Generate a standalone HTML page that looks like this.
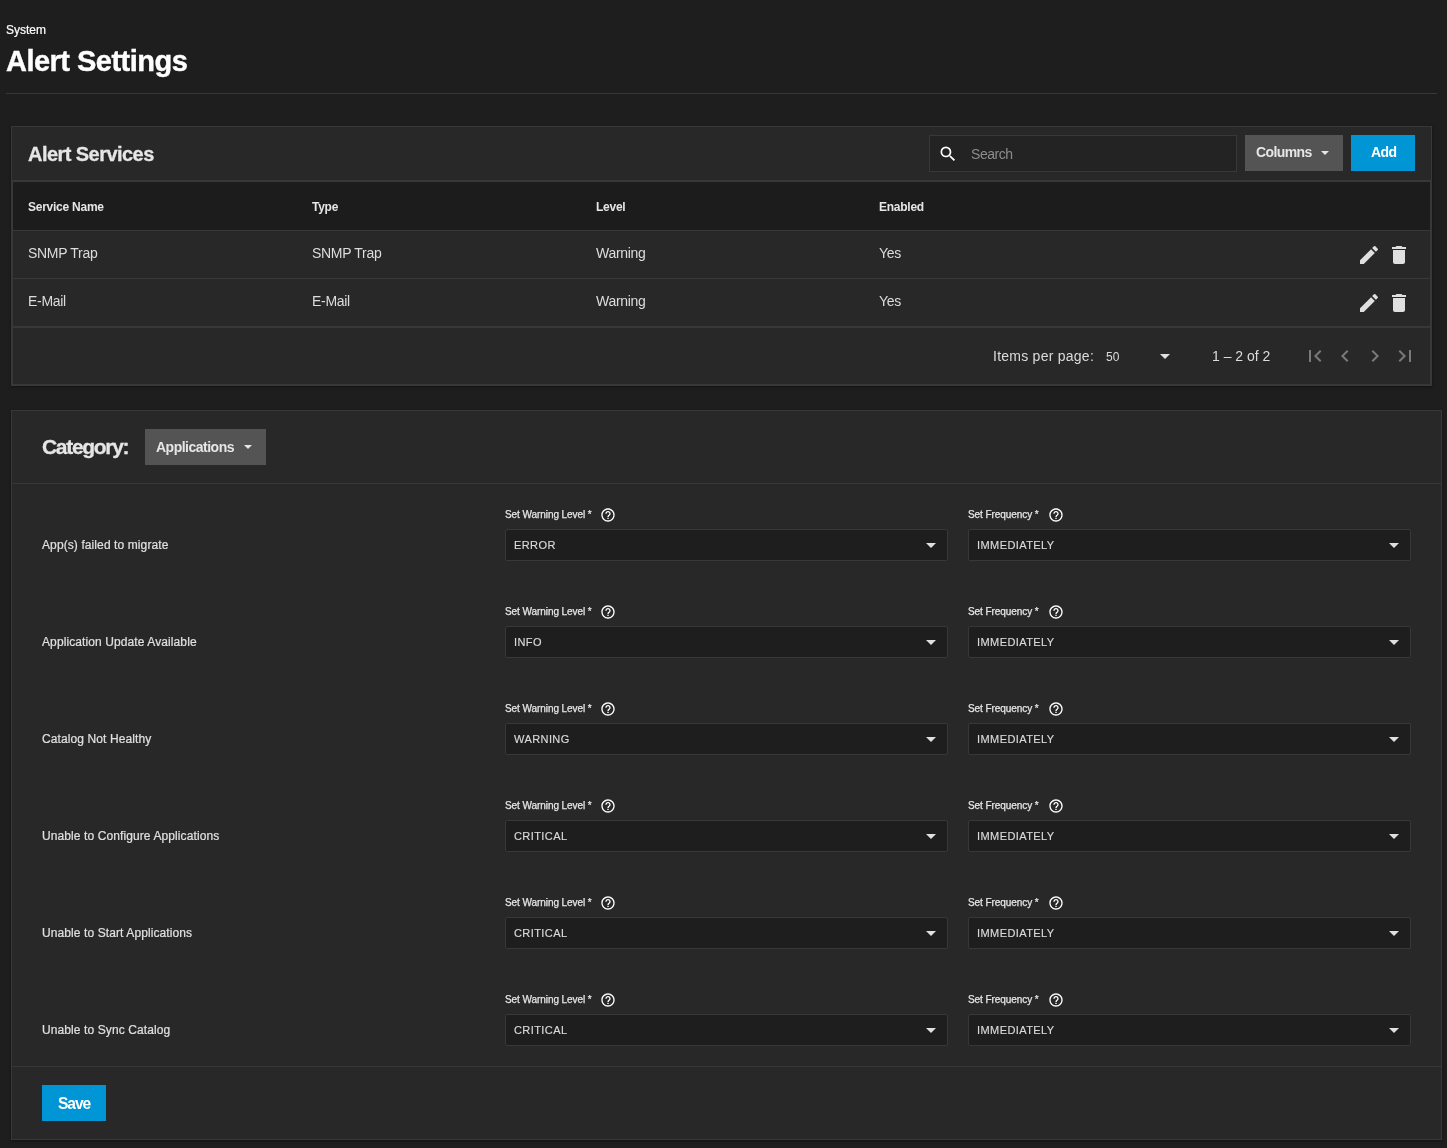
<!DOCTYPE html>
<html><head><meta charset="utf-8"><style>
html,body{margin:0;padding:0;background:#1e1e1e;width:1447px;height:1148px;overflow:hidden;position:relative;font-family:"Liberation Sans", sans-serif;}
.t{position:absolute;line-height:1;white-space:nowrap;will-change:transform;}
.b{position:absolute;box-sizing:border-box;}
svg{position:absolute;}
</style></head><body>
<div class="t" style="left:6px;top:23.94px;font-size:12px;font-weight:400;color:#ffffff;letter-spacing:0px;-webkit-text-stroke:0.2px #ffffff;">System</div>
<div class="t" style="left:6px;top:47.45px;font-size:29px;font-weight:700;color:#ffffff;letter-spacing:-0.52px;-webkit-text-stroke:0.4px #ffffff;">Alert Settings</div>
<div class="b" style="left:6px;top:93px;width:1431px;height:1px;background:#383838"></div>
<div class="b" style="left:11px;top:126px;width:1421px;height:260px;background:#282828;border:1px solid #383838;box-shadow:0 1px 3px rgba(0,0,0,.4)"></div>
<div class="t" style="left:28px;top:144.07px;font-size:20px;font-weight:700;color:#e6e6e6;letter-spacing:-0.55px;-webkit-text-stroke:0.3px #e6e6e6;">Alert Services</div>
<div class="b" style="left:929px;top:135px;width:308px;height:37px;background:#232323;border:1px solid #383838"></div>
<svg style="left:937.8px;top:143.7px" width="20" height="20" viewBox="0 0 24 24"><path fill="#ffffff" d="M15.5 14h-.79l-.28-.27A6.471 6.471 0 0 0 16 9.5 6.5 6.5 0 1 0 9.5 16c1.61 0 3.09-.59 4.23-1.57l.27.28v.79l5 4.99L20.49 19l-4.99-5zm-6 0C7.01 14 5 11.99 5 9.5S7.01 5 9.5 5 14 7.01 14 9.5 11.99 14 9.5 14z"/></svg>
<div class="t" style="left:970.5px;top:146.65px;font-size:14px;font-weight:400;color:#8c8c8c;letter-spacing:-0.45px;">Search</div>
<div class="b" style="left:1245px;top:135px;width:98px;height:36px;background:#545454"></div>
<div class="t" style="left:1255.5px;top:145.15px;font-size:14px;font-weight:700;color:#e6e6e6;letter-spacing:-0.6px;">Columns</div>
<div class="b" style="left:1321px;top:151px;width:0;height:0;border-left:4.2px solid transparent;border-right:4.2px solid transparent;border-top:4.2px solid #e6e6e6;"></div>
<div class="b" style="left:1351px;top:135px;width:64px;height:36px;background:#0095d5"></div>
<div class="t" style="left:1370.8px;top:145.45px;font-size:14px;font-weight:700;color:#ffffff;letter-spacing:-0.6px;">Add</div>
<div class="b" style="left:12px;top:180px;width:1419px;height:1px;background:#383838"></div>
<div class="b" style="left:12px;top:181px;width:1419px;height:204px;border:1px solid #383838"></div>
<div class="b" style="left:13px;top:182px;width:1417px;height:48px;background:#1c1c1c"></div>
<div class="b" style="left:13px;top:230px;width:1417px;height:1px;background:#383838"></div>
<div class="b" style="left:13px;top:278px;width:1417px;height:1px;background:#383838"></div>
<div class="b" style="left:13px;top:326px;width:1417px;height:2px;background:#383838"></div>
<div class="t" style="left:28px;top:200.84px;font-size:12px;font-weight:700;color:#e6e6e6;letter-spacing:-0.25px;">Service Name</div>
<div class="t" style="left:312px;top:200.84px;font-size:12px;font-weight:700;color:#e6e6e6;letter-spacing:-0.25px;">Type</div>
<div class="t" style="left:596px;top:200.84px;font-size:12px;font-weight:700;color:#e6e6e6;letter-spacing:-0.25px;">Level</div>
<div class="t" style="left:879px;top:200.84px;font-size:12px;font-weight:700;color:#e6e6e6;letter-spacing:-0.25px;">Enabled</div>
<div class="t" style="left:28px;top:246.25px;font-size:14px;font-weight:400;color:#dcdcdc;letter-spacing:-0.3px;">SNMP Trap</div>
<div class="t" style="left:312px;top:246.25px;font-size:14px;font-weight:400;color:#dcdcdc;letter-spacing:-0.3px;">SNMP Trap</div>
<div class="t" style="left:596px;top:246.25px;font-size:14px;font-weight:400;color:#dcdcdc;letter-spacing:-0.3px;">Warning</div>
<div class="t" style="left:879px;top:246.25px;font-size:14px;font-weight:400;color:#dcdcdc;letter-spacing:-0.3px;">Yes</div>
<svg style="left:1357px;top:243px" width="24" height="24" viewBox="0 0 24 24"><path fill="#e0e0e0" d="M3 17.25V21h3.75L17.81 9.94l-3.75-3.75L3 17.25zM20.71 7.04c.39-.39.39-1.02 0-1.41l-2.34-2.34a.996.996 0 0 0-1.41 0l-1.83 1.83 3.75 3.75 1.83-1.83z"/></svg>
<svg style="left:1387px;top:243px" width="24" height="24" viewBox="0 0 24 24"><path fill="#e0e0e0" d="M6 19c0 1.1.9 2 2 2h8c1.1 0 2-.9 2-2V7H6v12zM19 4h-3.5l-1-1h-5l-1 1H5v2h14V4z"/></svg>
<div class="t" style="left:28px;top:294.05px;font-size:14px;font-weight:400;color:#dcdcdc;letter-spacing:-0.3px;">E-Mail</div>
<div class="t" style="left:312px;top:294.05px;font-size:14px;font-weight:400;color:#dcdcdc;letter-spacing:-0.3px;">E-Mail</div>
<div class="t" style="left:596px;top:294.05px;font-size:14px;font-weight:400;color:#dcdcdc;letter-spacing:-0.3px;">Warning</div>
<div class="t" style="left:879px;top:294.05px;font-size:14px;font-weight:400;color:#dcdcdc;letter-spacing:-0.3px;">Yes</div>
<svg style="left:1357px;top:291px" width="24" height="24" viewBox="0 0 24 24"><path fill="#e0e0e0" d="M3 17.25V21h3.75L17.81 9.94l-3.75-3.75L3 17.25zM20.71 7.04c.39-.39.39-1.02 0-1.41l-2.34-2.34a.996.996 0 0 0-1.41 0l-1.83 1.83 3.75 3.75 1.83-1.83z"/></svg>
<svg style="left:1387px;top:291px" width="24" height="24" viewBox="0 0 24 24"><path fill="#e0e0e0" d="M6 19c0 1.1.9 2 2 2h8c1.1 0 2-.9 2-2V7H6v12zM19 4h-3.5l-1-1h-5l-1 1H5v2h14V4z"/></svg>
<div class="t" style="left:993px;top:349.15px;font-size:14px;font-weight:400;color:#dcdcdc;letter-spacing:0.25px;">Items per page:</div>
<div class="t" style="left:1105.5px;top:350.64px;font-size:12px;font-weight:400;color:#dcdcdc;letter-spacing:0px;">50</div>
<div class="b" style="left:1160px;top:354px;width:0;height:0;border-left:5px solid transparent;border-right:5px solid transparent;border-top:5px solid #e0e0e0;"></div>
<div class="t" style="left:1212px;top:348.95px;font-size:14px;font-weight:400;color:#dcdcdc;letter-spacing:0px;">1 – 2 of 2</div>
<svg style="left:1303px;top:344px" width="24" height="24" viewBox="0 0 24 24"><path fill="#7a7a7a" d="M18.41 16.59L13.82 12l4.59-4.59L17 6l-6 6 6 6zM6 6h2v12H6z"/></svg>
<svg style="left:1333px;top:344px" width="24" height="24" viewBox="0 0 24 24"><path fill="#7a7a7a" d="M15.41 7.41L14 6l-6 6 6 6 1.41-1.41L10.83 12z"/></svg>
<svg style="left:1363px;top:344px" width="24" height="24" viewBox="0 0 24 24"><path fill="#7a7a7a" d="M8.59 16.59L13.17 12 8.59 7.41 10 6l6 6-6 6-1.41-1.41z"/></svg>
<svg style="left:1393px;top:344px" width="24" height="24" viewBox="0 0 24 24"><path fill="#7a7a7a" d="M5.59 7.41L10.18 12l-4.59 4.59L7 18l6-6-6-6zM16 6h2v12h-2z"/></svg>
<div class="b" style="left:11px;top:410px;width:1431px;height:730px;background:#282828;border:1px solid #383838;box-shadow:0 1px 3px rgba(0,0,0,.4)"></div>
<div class="t" style="left:42px;top:436.22px;font-size:21px;font-weight:700;color:#e6e6e6;letter-spacing:-1.3px;-webkit-text-stroke:0.3px #e6e6e6;">Category:</div>
<div class="b" style="left:145px;top:429px;width:121px;height:36px;background:#545454"></div>
<div class="t" style="left:156px;top:440.45px;font-size:14px;font-weight:700;color:#e6e6e6;letter-spacing:-0.5px;">Applications</div>
<div class="b" style="left:243.5px;top:445px;width:0;height:0;border-left:4.4px solid transparent;border-right:4.4px solid transparent;border-top:4.4px solid #e6e6e6;"></div>
<div class="b" style="left:12px;top:483px;width:1429px;height:1px;background:#383838"></div>
<div class="t" style="left:41.5px;top:538.84px;font-size:12px;font-weight:400;color:#e0e0e0;letter-spacing:0.1px;-webkit-text-stroke:0.2px #e0e0e0;">App(s) failed to migrate</div>
<div class="t" style="left:505.4px;top:510.33px;font-size:10px;font-weight:400;color:#e6e6e6;letter-spacing:-0.07px;-webkit-text-stroke:0.25px #e6e6e6;">Set Warning Level *</div>
<svg style="left:600px;top:507px" width="16" height="16" viewBox="0 0 24 24"><path fill="#ffffff" d="M11 18h2v-2h-2v2zm1-16C6.48 2 2 6.48 2 12s4.48 10 10 10 10-4.48 10-10S17.52 2 12 2zm0 18c-4.41 0-8-3.59-8-8s3.59-8 8-8 8 3.59 8 8-3.59 8-8 8zm0-14c-2.21 0-4 1.79-4 4h2c0-1.1.9-2 2-2s2 .9 2 2c0 2-3 1.75-3 5h2c0-2.25 3-2.5 3-5 0-2.21-1.79-4-4-4z"/></svg>
<div class="b" style="left:505px;top:529px;width:443px;height:32px;background:#1e1e1e;border:1px solid #383838;border-radius:2px"></div>
<div class="t" style="left:513.8px;top:539.69px;font-size:11px;font-weight:400;color:#dadada;letter-spacing:0.42px;-webkit-text-stroke:0.15px #dadada;">ERROR</div>
<div class="b" style="left:926px;top:543px;width:0;height:0;border-left:5px solid transparent;border-right:5px solid transparent;border-top:5px solid #e0e0e0;"></div>
<div class="t" style="left:968.4px;top:510.33px;font-size:10px;font-weight:400;color:#e6e6e6;letter-spacing:-0.07px;-webkit-text-stroke:0.25px #e6e6e6;">Set Frequency *</div>
<svg style="left:1048px;top:507px" width="16" height="16" viewBox="0 0 24 24"><path fill="#ffffff" d="M11 18h2v-2h-2v2zm1-16C6.48 2 2 6.48 2 12s4.48 10 10 10 10-4.48 10-10S17.52 2 12 2zm0 18c-4.41 0-8-3.59-8-8s3.59-8 8-8 8 3.59 8 8-3.59 8-8 8zm0-14c-2.21 0-4 1.79-4 4h2c0-1.1.9-2 2-2s2 .9 2 2c0 2-3 1.75-3 5h2c0-2.25 3-2.5 3-5 0-2.21-1.79-4-4-4z"/></svg>
<div class="b" style="left:968px;top:529px;width:443px;height:32px;background:#1e1e1e;border:1px solid #383838;border-radius:2px"></div>
<div class="t" style="left:976.8px;top:539.69px;font-size:11px;font-weight:400;color:#dadada;letter-spacing:0.42px;-webkit-text-stroke:0.15px #dadada;">IMMEDIATELY</div>
<div class="b" style="left:1389px;top:543px;width:0;height:0;border-left:5px solid transparent;border-right:5px solid transparent;border-top:5px solid #e0e0e0;"></div>
<div class="t" style="left:41.5px;top:635.84px;font-size:12px;font-weight:400;color:#e0e0e0;letter-spacing:0.1px;-webkit-text-stroke:0.2px #e0e0e0;">Application Update Available</div>
<div class="t" style="left:505.4px;top:607.33px;font-size:10px;font-weight:400;color:#e6e6e6;letter-spacing:-0.07px;-webkit-text-stroke:0.25px #e6e6e6;">Set Warning Level *</div>
<svg style="left:600px;top:604px" width="16" height="16" viewBox="0 0 24 24"><path fill="#ffffff" d="M11 18h2v-2h-2v2zm1-16C6.48 2 2 6.48 2 12s4.48 10 10 10 10-4.48 10-10S17.52 2 12 2zm0 18c-4.41 0-8-3.59-8-8s3.59-8 8-8 8 3.59 8 8-3.59 8-8 8zm0-14c-2.21 0-4 1.79-4 4h2c0-1.1.9-2 2-2s2 .9 2 2c0 2-3 1.75-3 5h2c0-2.25 3-2.5 3-5 0-2.21-1.79-4-4-4z"/></svg>
<div class="b" style="left:505px;top:626px;width:443px;height:32px;background:#1e1e1e;border:1px solid #383838;border-radius:2px"></div>
<div class="t" style="left:513.8px;top:636.69px;font-size:11px;font-weight:400;color:#dadada;letter-spacing:0.42px;-webkit-text-stroke:0.15px #dadada;">INFO</div>
<div class="b" style="left:926px;top:640px;width:0;height:0;border-left:5px solid transparent;border-right:5px solid transparent;border-top:5px solid #e0e0e0;"></div>
<div class="t" style="left:968.4px;top:607.33px;font-size:10px;font-weight:400;color:#e6e6e6;letter-spacing:-0.07px;-webkit-text-stroke:0.25px #e6e6e6;">Set Frequency *</div>
<svg style="left:1048px;top:604px" width="16" height="16" viewBox="0 0 24 24"><path fill="#ffffff" d="M11 18h2v-2h-2v2zm1-16C6.48 2 2 6.48 2 12s4.48 10 10 10 10-4.48 10-10S17.52 2 12 2zm0 18c-4.41 0-8-3.59-8-8s3.59-8 8-8 8 3.59 8 8-3.59 8-8 8zm0-14c-2.21 0-4 1.79-4 4h2c0-1.1.9-2 2-2s2 .9 2 2c0 2-3 1.75-3 5h2c0-2.25 3-2.5 3-5 0-2.21-1.79-4-4-4z"/></svg>
<div class="b" style="left:968px;top:626px;width:443px;height:32px;background:#1e1e1e;border:1px solid #383838;border-radius:2px"></div>
<div class="t" style="left:976.8px;top:636.69px;font-size:11px;font-weight:400;color:#dadada;letter-spacing:0.42px;-webkit-text-stroke:0.15px #dadada;">IMMEDIATELY</div>
<div class="b" style="left:1389px;top:640px;width:0;height:0;border-left:5px solid transparent;border-right:5px solid transparent;border-top:5px solid #e0e0e0;"></div>
<div class="t" style="left:41.5px;top:732.84px;font-size:12px;font-weight:400;color:#e0e0e0;letter-spacing:0.1px;-webkit-text-stroke:0.2px #e0e0e0;">Catalog Not Healthy</div>
<div class="t" style="left:505.4px;top:704.33px;font-size:10px;font-weight:400;color:#e6e6e6;letter-spacing:-0.07px;-webkit-text-stroke:0.25px #e6e6e6;">Set Warning Level *</div>
<svg style="left:600px;top:701px" width="16" height="16" viewBox="0 0 24 24"><path fill="#ffffff" d="M11 18h2v-2h-2v2zm1-16C6.48 2 2 6.48 2 12s4.48 10 10 10 10-4.48 10-10S17.52 2 12 2zm0 18c-4.41 0-8-3.59-8-8s3.59-8 8-8 8 3.59 8 8-3.59 8-8 8zm0-14c-2.21 0-4 1.79-4 4h2c0-1.1.9-2 2-2s2 .9 2 2c0 2-3 1.75-3 5h2c0-2.25 3-2.5 3-5 0-2.21-1.79-4-4-4z"/></svg>
<div class="b" style="left:505px;top:723px;width:443px;height:32px;background:#1e1e1e;border:1px solid #383838;border-radius:2px"></div>
<div class="t" style="left:513.8px;top:733.69px;font-size:11px;font-weight:400;color:#dadada;letter-spacing:0.42px;-webkit-text-stroke:0.15px #dadada;">WARNING</div>
<div class="b" style="left:926px;top:737px;width:0;height:0;border-left:5px solid transparent;border-right:5px solid transparent;border-top:5px solid #e0e0e0;"></div>
<div class="t" style="left:968.4px;top:704.33px;font-size:10px;font-weight:400;color:#e6e6e6;letter-spacing:-0.07px;-webkit-text-stroke:0.25px #e6e6e6;">Set Frequency *</div>
<svg style="left:1048px;top:701px" width="16" height="16" viewBox="0 0 24 24"><path fill="#ffffff" d="M11 18h2v-2h-2v2zm1-16C6.48 2 2 6.48 2 12s4.48 10 10 10 10-4.48 10-10S17.52 2 12 2zm0 18c-4.41 0-8-3.59-8-8s3.59-8 8-8 8 3.59 8 8-3.59 8-8 8zm0-14c-2.21 0-4 1.79-4 4h2c0-1.1.9-2 2-2s2 .9 2 2c0 2-3 1.75-3 5h2c0-2.25 3-2.5 3-5 0-2.21-1.79-4-4-4z"/></svg>
<div class="b" style="left:968px;top:723px;width:443px;height:32px;background:#1e1e1e;border:1px solid #383838;border-radius:2px"></div>
<div class="t" style="left:976.8px;top:733.69px;font-size:11px;font-weight:400;color:#dadada;letter-spacing:0.42px;-webkit-text-stroke:0.15px #dadada;">IMMEDIATELY</div>
<div class="b" style="left:1389px;top:737px;width:0;height:0;border-left:5px solid transparent;border-right:5px solid transparent;border-top:5px solid #e0e0e0;"></div>
<div class="t" style="left:41.5px;top:829.84px;font-size:12px;font-weight:400;color:#e0e0e0;letter-spacing:0.1px;-webkit-text-stroke:0.2px #e0e0e0;">Unable to Configure Applications</div>
<div class="t" style="left:505.4px;top:801.33px;font-size:10px;font-weight:400;color:#e6e6e6;letter-spacing:-0.07px;-webkit-text-stroke:0.25px #e6e6e6;">Set Warning Level *</div>
<svg style="left:600px;top:798px" width="16" height="16" viewBox="0 0 24 24"><path fill="#ffffff" d="M11 18h2v-2h-2v2zm1-16C6.48 2 2 6.48 2 12s4.48 10 10 10 10-4.48 10-10S17.52 2 12 2zm0 18c-4.41 0-8-3.59-8-8s3.59-8 8-8 8 3.59 8 8-3.59 8-8 8zm0-14c-2.21 0-4 1.79-4 4h2c0-1.1.9-2 2-2s2 .9 2 2c0 2-3 1.75-3 5h2c0-2.25 3-2.5 3-5 0-2.21-1.79-4-4-4z"/></svg>
<div class="b" style="left:505px;top:820px;width:443px;height:32px;background:#1e1e1e;border:1px solid #383838;border-radius:2px"></div>
<div class="t" style="left:513.8px;top:830.69px;font-size:11px;font-weight:400;color:#dadada;letter-spacing:0.42px;-webkit-text-stroke:0.15px #dadada;">CRITICAL</div>
<div class="b" style="left:926px;top:834px;width:0;height:0;border-left:5px solid transparent;border-right:5px solid transparent;border-top:5px solid #e0e0e0;"></div>
<div class="t" style="left:968.4px;top:801.33px;font-size:10px;font-weight:400;color:#e6e6e6;letter-spacing:-0.07px;-webkit-text-stroke:0.25px #e6e6e6;">Set Frequency *</div>
<svg style="left:1048px;top:798px" width="16" height="16" viewBox="0 0 24 24"><path fill="#ffffff" d="M11 18h2v-2h-2v2zm1-16C6.48 2 2 6.48 2 12s4.48 10 10 10 10-4.48 10-10S17.52 2 12 2zm0 18c-4.41 0-8-3.59-8-8s3.59-8 8-8 8 3.59 8 8-3.59 8-8 8zm0-14c-2.21 0-4 1.79-4 4h2c0-1.1.9-2 2-2s2 .9 2 2c0 2-3 1.75-3 5h2c0-2.25 3-2.5 3-5 0-2.21-1.79-4-4-4z"/></svg>
<div class="b" style="left:968px;top:820px;width:443px;height:32px;background:#1e1e1e;border:1px solid #383838;border-radius:2px"></div>
<div class="t" style="left:976.8px;top:830.69px;font-size:11px;font-weight:400;color:#dadada;letter-spacing:0.42px;-webkit-text-stroke:0.15px #dadada;">IMMEDIATELY</div>
<div class="b" style="left:1389px;top:834px;width:0;height:0;border-left:5px solid transparent;border-right:5px solid transparent;border-top:5px solid #e0e0e0;"></div>
<div class="t" style="left:41.5px;top:926.84px;font-size:12px;font-weight:400;color:#e0e0e0;letter-spacing:0.1px;-webkit-text-stroke:0.2px #e0e0e0;">Unable to Start Applications</div>
<div class="t" style="left:505.4px;top:898.33px;font-size:10px;font-weight:400;color:#e6e6e6;letter-spacing:-0.07px;-webkit-text-stroke:0.25px #e6e6e6;">Set Warning Level *</div>
<svg style="left:600px;top:895px" width="16" height="16" viewBox="0 0 24 24"><path fill="#ffffff" d="M11 18h2v-2h-2v2zm1-16C6.48 2 2 6.48 2 12s4.48 10 10 10 10-4.48 10-10S17.52 2 12 2zm0 18c-4.41 0-8-3.59-8-8s3.59-8 8-8 8 3.59 8 8-3.59 8-8 8zm0-14c-2.21 0-4 1.79-4 4h2c0-1.1.9-2 2-2s2 .9 2 2c0 2-3 1.75-3 5h2c0-2.25 3-2.5 3-5 0-2.21-1.79-4-4-4z"/></svg>
<div class="b" style="left:505px;top:917px;width:443px;height:32px;background:#1e1e1e;border:1px solid #383838;border-radius:2px"></div>
<div class="t" style="left:513.8px;top:927.69px;font-size:11px;font-weight:400;color:#dadada;letter-spacing:0.42px;-webkit-text-stroke:0.15px #dadada;">CRITICAL</div>
<div class="b" style="left:926px;top:931px;width:0;height:0;border-left:5px solid transparent;border-right:5px solid transparent;border-top:5px solid #e0e0e0;"></div>
<div class="t" style="left:968.4px;top:898.33px;font-size:10px;font-weight:400;color:#e6e6e6;letter-spacing:-0.07px;-webkit-text-stroke:0.25px #e6e6e6;">Set Frequency *</div>
<svg style="left:1048px;top:895px" width="16" height="16" viewBox="0 0 24 24"><path fill="#ffffff" d="M11 18h2v-2h-2v2zm1-16C6.48 2 2 6.48 2 12s4.48 10 10 10 10-4.48 10-10S17.52 2 12 2zm0 18c-4.41 0-8-3.59-8-8s3.59-8 8-8 8 3.59 8 8-3.59 8-8 8zm0-14c-2.21 0-4 1.79-4 4h2c0-1.1.9-2 2-2s2 .9 2 2c0 2-3 1.75-3 5h2c0-2.25 3-2.5 3-5 0-2.21-1.79-4-4-4z"/></svg>
<div class="b" style="left:968px;top:917px;width:443px;height:32px;background:#1e1e1e;border:1px solid #383838;border-radius:2px"></div>
<div class="t" style="left:976.8px;top:927.69px;font-size:11px;font-weight:400;color:#dadada;letter-spacing:0.42px;-webkit-text-stroke:0.15px #dadada;">IMMEDIATELY</div>
<div class="b" style="left:1389px;top:931px;width:0;height:0;border-left:5px solid transparent;border-right:5px solid transparent;border-top:5px solid #e0e0e0;"></div>
<div class="t" style="left:41.5px;top:1023.84px;font-size:12px;font-weight:400;color:#e0e0e0;letter-spacing:0.1px;-webkit-text-stroke:0.2px #e0e0e0;">Unable to Sync Catalog</div>
<div class="t" style="left:505.4px;top:995.33px;font-size:10px;font-weight:400;color:#e6e6e6;letter-spacing:-0.07px;-webkit-text-stroke:0.25px #e6e6e6;">Set Warning Level *</div>
<svg style="left:600px;top:992px" width="16" height="16" viewBox="0 0 24 24"><path fill="#ffffff" d="M11 18h2v-2h-2v2zm1-16C6.48 2 2 6.48 2 12s4.48 10 10 10 10-4.48 10-10S17.52 2 12 2zm0 18c-4.41 0-8-3.59-8-8s3.59-8 8-8 8 3.59 8 8-3.59 8-8 8zm0-14c-2.21 0-4 1.79-4 4h2c0-1.1.9-2 2-2s2 .9 2 2c0 2-3 1.75-3 5h2c0-2.25 3-2.5 3-5 0-2.21-1.79-4-4-4z"/></svg>
<div class="b" style="left:505px;top:1014px;width:443px;height:32px;background:#1e1e1e;border:1px solid #383838;border-radius:2px"></div>
<div class="t" style="left:513.8px;top:1024.69px;font-size:11px;font-weight:400;color:#dadada;letter-spacing:0.42px;-webkit-text-stroke:0.15px #dadada;">CRITICAL</div>
<div class="b" style="left:926px;top:1028px;width:0;height:0;border-left:5px solid transparent;border-right:5px solid transparent;border-top:5px solid #e0e0e0;"></div>
<div class="t" style="left:968.4px;top:995.33px;font-size:10px;font-weight:400;color:#e6e6e6;letter-spacing:-0.07px;-webkit-text-stroke:0.25px #e6e6e6;">Set Frequency *</div>
<svg style="left:1048px;top:992px" width="16" height="16" viewBox="0 0 24 24"><path fill="#ffffff" d="M11 18h2v-2h-2v2zm1-16C6.48 2 2 6.48 2 12s4.48 10 10 10 10-4.48 10-10S17.52 2 12 2zm0 18c-4.41 0-8-3.59-8-8s3.59-8 8-8 8 3.59 8 8-3.59 8-8 8zm0-14c-2.21 0-4 1.79-4 4h2c0-1.1.9-2 2-2s2 .9 2 2c0 2-3 1.75-3 5h2c0-2.25 3-2.5 3-5 0-2.21-1.79-4-4-4z"/></svg>
<div class="b" style="left:968px;top:1014px;width:443px;height:32px;background:#1e1e1e;border:1px solid #383838;border-radius:2px"></div>
<div class="t" style="left:976.8px;top:1024.69px;font-size:11px;font-weight:400;color:#dadada;letter-spacing:0.42px;-webkit-text-stroke:0.15px #dadada;">IMMEDIATELY</div>
<div class="b" style="left:1389px;top:1028px;width:0;height:0;border-left:5px solid transparent;border-right:5px solid transparent;border-top:5px solid #e0e0e0;"></div>
<div class="b" style="left:12px;top:1066px;width:1429px;height:1px;background:#383838"></div>
<div class="b" style="left:42px;top:1085px;width:64px;height:36px;background:#0095d5"></div>
<div class="t" style="left:57.8px;top:1096.39px;font-size:15.6px;font-weight:700;color:#ffffff;letter-spacing:-1.05px;">Save</div>
</body></html>
